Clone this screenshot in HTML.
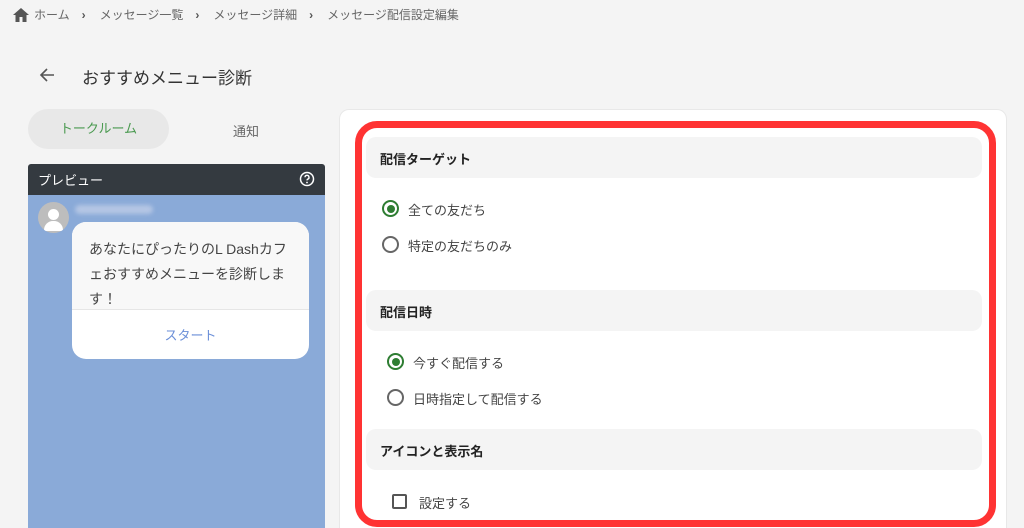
<!DOCTYPE html>
<html><head><meta charset="utf-8"><style>
*{margin:0;padding:0;box-sizing:border-box}
html,body{width:1024px;height:528px;overflow:hidden}
body{background:#f4f4f4;font-family:"Liberation Sans","Noto Sans CJK JP",sans-serif;color:#333;position:relative}
.a{position:absolute}
.crumb{top:6px;left:12px;font-size:12px;color:#666;display:flex;align-items:center;white-space:nowrap}
.crumb span{margin-right:12px}
.crumb b{margin-right:14px;font-weight:bold;color:#555}
.sec{position:absolute;left:366px;width:616px;height:41px;background:#f4f4f4;border-radius:10px;font-size:13px;font-weight:bold;color:#222;padding:12px 0 0 14px}
.rad{position:absolute;width:17px;height:17px;border:2px solid #666;border-radius:50%}
.rad.on{border-color:#2e7d32}
.rad.on:after{content:"";position:absolute;left:2.5px;top:2.5px;width:8px;height:8px;border-radius:50%;background:#2e7d32}
.lbl{position:absolute;font-size:13px;color:#444}
</style></head><body>
<div class="a crumb"><svg width="18" height="16" viewBox="0 0 18 16" style="margin-right:4px"><path d="M9 1L1 8h2.5v7h4v-5h3v5h4V8H17z" fill="#555"/></svg><span>ホーム</span><b>›</b><span>メッセージ一覧</span><b>›</b><span>メッセージ詳細</span><b>›</b><span>メッセージ配信設定編集</span></div>
<svg class="a" style="left:39px;top:67px" width="16" height="16" viewBox="0 0 16 16"><path d="M15 8H2M8 2L2 8l6 6" stroke="#555" stroke-width="1.6" fill="none"/></svg>
<div class="a" style="left:82px;top:64px;font-size:17px;color:#333">おすすめメニュー診断</div>
<div class="a" style="left:28px;top:109px;width:141px;height:40px;border-radius:20px;background:#e8e8e8;color:#4a9a50;font-size:13px;text-align:center;line-height:40px">トークルーム</div>
<div class="a" style="left:233px;top:121px;font-size:13px;color:#666">通知</div>
<div class="a" style="left:28px;top:164px;width:297px;height:31px;background:#343a40;border-radius:3px 3px 0 0;color:#fff;font-size:13px;padding:6px 0 0 10px">プレビュー
<svg class="a" style="right:10px;top:7px" width="16" height="16" viewBox="0 0 16 16"><circle cx="8" cy="8" r="6.5" stroke="#fff" stroke-width="1.5" fill="none"/><path d="M6 6.3a2 2 0 1 1 2.7 1.9c-.5.2-.7.6-.7 1.2" stroke="#fff" stroke-width="1.4" fill="none"/><circle cx="8" cy="11.5" r=".9" fill="#fff"/></svg></div>
<div class="a" style="left:28px;top:195px;width:297px;height:333px;background:#8aaad8"></div>
<div class="a" style="left:38px;top:202px;width:31px;height:31px;border-radius:50%;background:#bdbdbd;overflow:hidden"><div class="a" style="left:10px;top:7px;width:11px;height:11px;border-radius:50%;background:#fff"></div><div class="a" style="left:6px;top:19px;width:19px;height:10px;border-radius:9px 9px 0 0;background:#fff"></div></div>
<div class="a" style="left:75px;top:205px;width:78px;height:9px;border-radius:5px;background:#b4c6e4;filter:blur(2px)"></div>
<div class="a" style="left:72px;top:222px;width:237px;height:137px;background:#fff;border-radius:14px;overflow:hidden">
<div style="background:#f8f8f8;height:88px;padding:15px 22px 0 17px;font-size:14px;line-height:25px;color:#444;border-bottom:1px solid #e6e6e6">あなたにぴったりのL Dashカフェおすすめメニューを診断します！</div>
<div style="text-align:center;color:#6b8fd8;font-size:13px;padding-top:15px">スタート</div></div>
<div class="a" style="left:339px;top:109px;width:668px;height:419px;background:#fff;border-radius:10px 10px 0 0;border:1px solid #e8e8e8;border-bottom:none"></div>
<div class="a" style="left:355px;top:121px;width:641px;height:406px;border:7px solid #ff3333;border-radius:22px"></div>
<div class="sec" style="top:137px">配信ターゲット</div>
<div class="rad on" style="left:382px;top:200px"></div><div class="lbl" style="left:408px;top:200px">全ての友だち</div>
<div class="rad" style="left:382px;top:236px"></div><div class="lbl" style="left:408px;top:236px">特定の友だちのみ</div>
<div class="sec" style="top:290px">配信日時</div>
<div class="rad on" style="left:387px;top:353px"></div><div class="lbl" style="left:413px;top:353px">今すぐ配信する</div>
<div class="rad" style="left:387px;top:389px"></div><div class="lbl" style="left:413px;top:389px">日時指定して配信する</div>
<div class="sec" style="top:429px">アイコンと表示名</div>
<div class="a" style="left:392px;top:494px;width:15px;height:15px;border:2px solid #555;border-radius:2px"></div><div class="lbl" style="left:419px;top:493px">設定する</div>
</body></html>
